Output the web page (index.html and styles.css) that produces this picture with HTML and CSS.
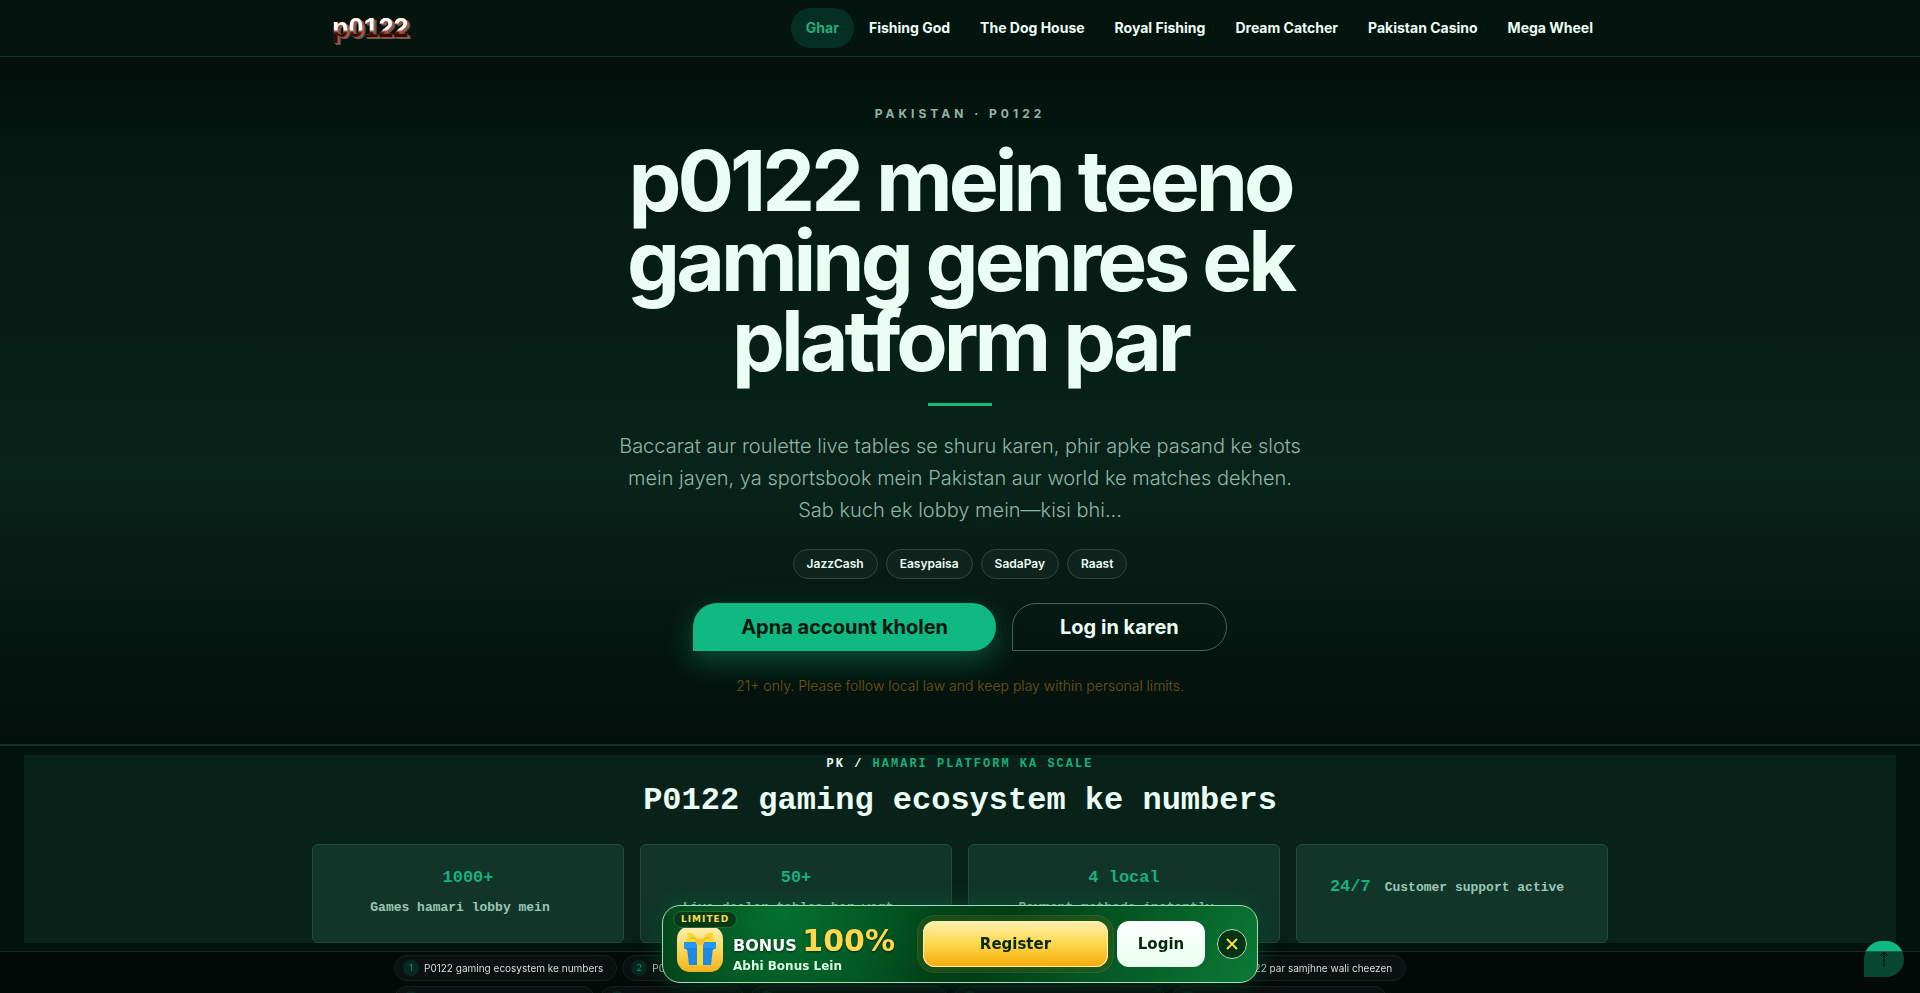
FILE: index.html
```html
<!DOCTYPE html>
<html lang="ur-Latn">
<head>
  <meta charset="UTF-8">
  <meta name="viewport" content="width=device-width, initial-scale=1.0">
  <title>p0122</title>
  <link rel="stylesheet" href="styles.css">
</head>
<body>
  <header class="site-header">
    <div class="header-inner">
      <a class="logo" href="#" data-text="p0122">p0122</a>
      <nav class="main-nav">
        <a class="active" href="#">Ghar</a>
        <a href="#">Fishing God</a>
        <a href="#">The Dog House</a>
        <a href="#">Royal Fishing</a>
        <a href="#">Dream Catcher</a>
        <a href="#">Pakistan Casino</a>
        <a href="#">Mega Wheel</a>
      </nav>
    </div>
  </header>

  <main>
    <section class="hero">
      <p class="eyebrow">Pakistan · p0122</p>
      <h1>p0122 mein teeno gaming genres ek platform par</h1>
      <div class="rule"></div>
      <p class="lead">Baccarat aur roulette live tables se shuru karen, phir apke pasand ke slots mein jayen, ya sportsbook mein Pakistan aur world ke matches dekhen. Sab kuch ek lobby mein—kisi bhi...</p>
      <ul class="pay-list">
        <li>JazzCash</li>
        <li>Easypaisa</li>
        <li>SadaPay</li>
        <li>Raast</li>
      </ul>
      <div class="hero-actions">
        <a class="btn btn-primary" href="#">Apna account kholen</a>
        <a class="btn btn-outline" href="#">Log in karen</a>
      </div>
      <p class="age-note">21+ only. Please follow local law and keep play within personal limits.</p>
    </section>

    <section class="stats" id="numbers">
      <p class="stats-eyebrow"><span>PK /</span> Hamari platform ka scale</p>
      <h2>P0122 gaming ecosystem ke numbers</h2>
      <div class="stats-grid">
        <div class="stat"><strong>1000+</strong><span>Games hamari lobby mein</span></div>
        <div class="stat"><strong>50+</strong><span>Live dealer tables har waqt</span></div>
        <div class="stat"><strong>4 local</strong><span>Payment methods instantly</span></div>
        <div class="stat stat-inline"><strong>24/7</strong><span>Customer support active</span></div>
      </div>
    </section>
  </main>

  <a class="to-top" href="#" aria-label="Back to top">
    <svg viewBox="0 0 20 20" width="20" height="20"><path d="M10 18V3M6 7l4-4 4 4"/></svg>
  </a>

  <nav class="toc">
    <ol>
      <li><a href="#numbers"><i>1</i>P0122 gaming ecosystem ke numbers</a></li>
      <li><a href="#"><i>2</i>P0122 live casino ke tables</a></li>
      <li><a href="#"><i>3</i>P0122 slots aur jackpot games</a></li>
      <li><a href="#"><i>4</i>P0122 sportsbook aur odds dekhen</a></li>
      <li><a href="#"><i>5</i>P0122 par samjhne wali cheezen</a></li>
    </ol>
    <ol>
      <li><a href="#"><i>6</i>Pakistan mein deposit ke tareeqe</a></li>
      <li><a href="#"><i>7</i>Account kaise kholen</a></li>
      <li><a href="#"><i>8</i>Mobile par p0122 kaise chalayen</a></li>
      <li><a href="#"><i>9</i>Bonus aur promotions ki sab tafseel</a></li>
      <li><a href="#"><i>10</i>Aksar pooche jane wale sab sawalat</a></li>
    </ol>
  </nav>

  <aside class="promo">
    <span class="promo-tag">LIMITED</span>
    <div class="promo-gift">
      <svg viewBox="0 0 40 40" width="40" height="40">
        <path d="M19 13C17 8 11 2 7 4c1 3 0 6-2 9zM21 13c2-5 8-11 12-9-1 3 0 6 2 9z" fill="#fdd835"/>
        <path d="M18 12c-3-3-6-4-8-2M22 12c3-3 6-4 8-2" fill="none" stroke="#e0a800" stroke-width="1"/>
        <path d="M7 19h26l-2 17H9z" fill="#1e88e5"/>
        <path d="M4 13h32v6q0 1-1 1H5q-1 0-1-1z" fill="#2196f3"/>
        <path d="M6 20h28" stroke="#1976d2" stroke-width="1"/>
        <path d="M17 13h6v23h-6z" fill="#fdd835"/>
        <rect x="16" y="10" width="8" height="6" rx="2" fill="#fbc02d"/>
      </svg>
    </div>
    <div class="promo-text">
      <p class="promo-title">BONUS <b>100%</b></p>
      <p class="promo-sub">Abhi Bonus Lein</p>
    </div>
    <div class="promo-actions">
      <a class="promo-register" href="#">Register</a>
      <a class="promo-login" href="#">Login</a>
    </div>
    <button class="promo-close" type="button" aria-label="Close">
      <svg viewBox="0 0 14 14" width="14" height="14"><path d="M2 2l10 10M12 2L2 12"/></svg>
    </button>
  </aside>
</body>
</html>
```
FILE: styles.css
```css
* {
  box-sizing: border-box;
}

:root {
  --green: #10b981;
  --ink: #ecfdf5;
  --muted: #8fb5a6;
  --bg: #02120d;
  --panel: #08221a;
  --card: #113529;
  --sans: Inter, "Liberation Sans", sans-serif;
  --mono: "Liberation Mono", monospace;
}

body {
  margin: 0;
  height: 100vh;
  overflow: hidden;
  background: var(--bg);
  color: var(--ink);
  font-family: var(--sans);
}

a {
  color: inherit;
  text-decoration: none;
}

h1,
h2,
p,
ul,
ol {
  margin: 0;
  padding: 0;
  list-style: none;
}

/* header */
.site-header {
  height: 57px;
  background: #04140f;
  border-bottom: 1px solid #0c3a2b;
}

.header-inner {
  max-width: 1296px;
  height: 56px;
  margin: 0 auto;
  padding-left: 20px;
  display: flex;
  align-items: center;
  justify-content: space-between;
}

.logo {
  position: relative;
  font: bold 27px/30px "Liberation Sans", Arial, sans-serif;
  color: #e2572b;
  text-shadow: 1px 1px 0 #b8452a, 2px 2px 0 #59605f, 3px 2px 0 #59605f;
}

.logo::after {
  content: attr(data-text);
  position: absolute;
  inset: 0;
  background: linear-gradient(#fff 55%, #6a2416 64%, #2a0d08 72%);
  -webkit-background-clip: text;
  background-clip: text;
  color: transparent;
  text-shadow: none;
}

.main-nav {
  display: flex;
}

.main-nav a {
  padding: 0 15px;
  border-radius: 20px;
  font-size: 14px;
  font-weight: 700;
  line-height: 40px;
}

.main-nav .active {
  background: #062f23;
  color: #1fae7d;
}

/* hero */
.hero {
  padding: 47px 24px 47px;
  display: flex;
  flex-direction: column;
  align-items: center;
  text-align: center;
  background: linear-gradient(#020e0a, #051912 14%, #08231a 61%, #030f0b);
  border-bottom: 2px solid #1a2e27;
}

.eyebrow {
  font-size: 12px;
  font-weight: 700;
  line-height: 20px;
  letter-spacing: 4px;
  text-transform: uppercase;
  color: var(--muted);
}

h1 {
  max-width: 720px;
  margin-top: 17px;
  font-size: 84px;
  font-weight: 700;
  line-height: 80px;
  letter-spacing: -4px;
}

.rule {
  width: 64px;
  height: 3px;
  margin: 22px 0 24px;
  background: var(--green);
}

.lead {
  max-width: 694px;
  font-size: 20px;
  font-weight: 300;
  line-height: 32px;
  color: var(--muted);
}

.pay-list {
  display: flex;
  gap: 8px;
  margin-top: 23px;
}

.pay-list li {
  padding: 0 13px;
  border: 1px solid #31473f;
  border-radius: 15px;
  background: #10231d;
  font-size: 12px;
  font-weight: 600;
  line-height: 28px;
}

.hero-actions {
  display: flex;
  gap: 16px;
  margin-top: 24px;
}

.btn {
  padding: 0 47px;
  border: 1px solid transparent;
  border-radius: 24px 24px 24px 0;
  font-size: 20px;
  font-weight: 700;
  line-height: 46px;
}

.btn-primary {
  background: var(--green);
  color: #04170f;
  box-shadow: 0 10px 28px rgba(16, 185, 129, 0.35);
}

.btn-outline {
  border-color: #4a5f57;
}

.age-note {
  margin-top: 24px;
  font-size: 14px;
  font-weight: 300;
  line-height: 22px;
  color: #735610;
}

/* numbers */
.stats {
  margin: 9px 24px 0;
  background: var(--panel);
  font-family: var(--mono);
  text-align: center;
}

.stats-eyebrow {
  font-size: 12px;
  font-weight: 700;
  line-height: 18px;
  letter-spacing: 2px;
  text-transform: uppercase;
  color: #1aae7b;
}

.stats-eyebrow span {
  color: var(--ink);
}

h2 {
  margin-top: 8px;
  font-size: 32px;
  line-height: 40px;
}

.stats-grid {
  max-width: 1296px;
  margin: 23px auto 0;
  display: grid;
  grid-template-columns: repeat(4, 1fr);
  gap: 16px;
}

.stat {
  height: 99px;
  padding-bottom: 2px;
  display: flex;
  flex-direction: column;
  align-items: center;
  justify-content: center;
  border: 1px solid #28483c;
  border-radius: 6px;
  background: var(--card);
  font-weight: 700;
  line-height: 30px;
}

.stat strong {
  font-size: 17px;
  color: #18b07d;
}

.stat span {
  margin-right: 16px;
  font-size: 13px;
  color: #9cc7b5;
}

.stat-inline {
  flex-direction: row;
  align-items: baseline;
  gap: 14px;
  padding: 27px 0 0 6px;
}

/* floating bits */
.to-top {
  position: fixed;
  right: 16px;
  bottom: 16px;
  width: 40px;
  height: 36px;
  display: flex;
  align-items: center;
  justify-content: center;
  border-radius: 20px 20px 20px 0;
  background: var(--green);
}

.to-top svg {
  fill: none;
  stroke: #04170f;
  stroke-width: 1;
}

.toc {
  position: fixed;
  left: 0;
  right: 0;
  bottom: 0;
  height: 42px;
  padding-top: 3px;
  overflow: hidden;
  border-top: 1px solid rgba(255, 255, 255, 0.12);
  background: rgba(4, 6, 7, 0.64);
}

.toc ol {
  max-width: 1132px;
  margin: 0 auto 5px;
  display: flex;
  gap: 5px;
}

.toc a {
  display: flex;
  align-items: center;
  gap: 5px;
  padding: 0 13px 0 8px;
  border: 1px solid #17201e;
  border-radius: 13px;
  background: #0a1110;
  font-size: 10px;
  line-height: 24px;
  white-space: nowrap;
  color: #d5dfdb;
}

.toc i {
  width: 16px;
  border-radius: 50%;
  background: #06291f;
  font-size: 9px;
  font-style: normal;
  line-height: 16px;
  text-align: center;
  color: #159a6d;
}

.promo {
  position: fixed;
  left: 0;
  right: 0;
  bottom: 10px;
  max-width: 596px;
  height: 78px;
  margin: 0 auto;
  padding: 0 10px 0 14px;
  display: flex;
  align-items: center;
  border: 1px solid #a9dcb5;
  border-radius: 18px;
  background:
    radial-gradient(circle at 20% 10%, #04702f, transparent 32%),
    linear-gradient(120deg, #033c17 0%, #024a1c 35%, #003d17 55%, #0b7a36 100%);
  box-shadow: 0 0 22px rgba(10, 140, 70, 0.4), 0 8px 24px rgba(0, 0, 0, 0.5);
  font-family: "DejaVu Sans", sans-serif;
  font-weight: 700;
}

.promo-tag {
  position: absolute;
  top: 5px;
  left: 10px;
  padding: 0 7px;
  border: 1px solid #2a6a35;
  border-radius: 9px;
  background: #053a17;
  font-size: 9px;
  line-height: 15px;
  letter-spacing: 1px;
  color: #fcd94f;
}

.promo-gift {
  width: 46px;
  height: 46px;
  margin-top: 10px;
  padding: 3px;
  border-radius: 13px;
  background: linear-gradient(#fff0b5, #fbd85c 50%, #f5b31a);
}

.promo-text {
  margin: 10px 0 0 10px;
}

.promo-title {
  font-size: 16px;
  line-height: 28px;
  color: #fff;
  text-shadow: 0 1px 2px rgba(0, 0, 0, 0.6);
}

.promo-title b {
  font-size: 30px;
  color: #ffd84d;
}

.promo-sub {
  font-size: 12px;
  line-height: 12px;
  color: #d7fbe0;
}

.promo-actions {
  flex: 1;
  margin-left: 28px;
  display: flex;
  gap: 9px;
}

.promo-actions a {
  border-radius: 12px;
  font-size: 15px;
  line-height: 46px;
  text-align: center;
  color: #05290f;
}

.promo-register {
  flex: 1;
  background: linear-gradient(#fff0b3, #ffd84d 50%, #f4aa08);
  box-shadow: inset 0 0 0 1px #fff0a8, 0 0 0 5px rgba(0, 50, 15, 0.3), 0 0 0 6px rgba(200, 180, 40, 0.2);
}

.promo-login {
  width: 88px;
  background: linear-gradient(#fff, #eafff0);
}

.promo-close {
  width: 30px;
  height: 30px;
  margin-left: 12px;
  padding: 0;
  display: flex;
  align-items: center;
  justify-content: center;
  border: 1px solid #a9dcb5;
  border-radius: 50%;
  background: #043314;
}

.promo-close svg {
  fill: none;
  stroke: #ffd84d;
  stroke-width: 2;
}
```
